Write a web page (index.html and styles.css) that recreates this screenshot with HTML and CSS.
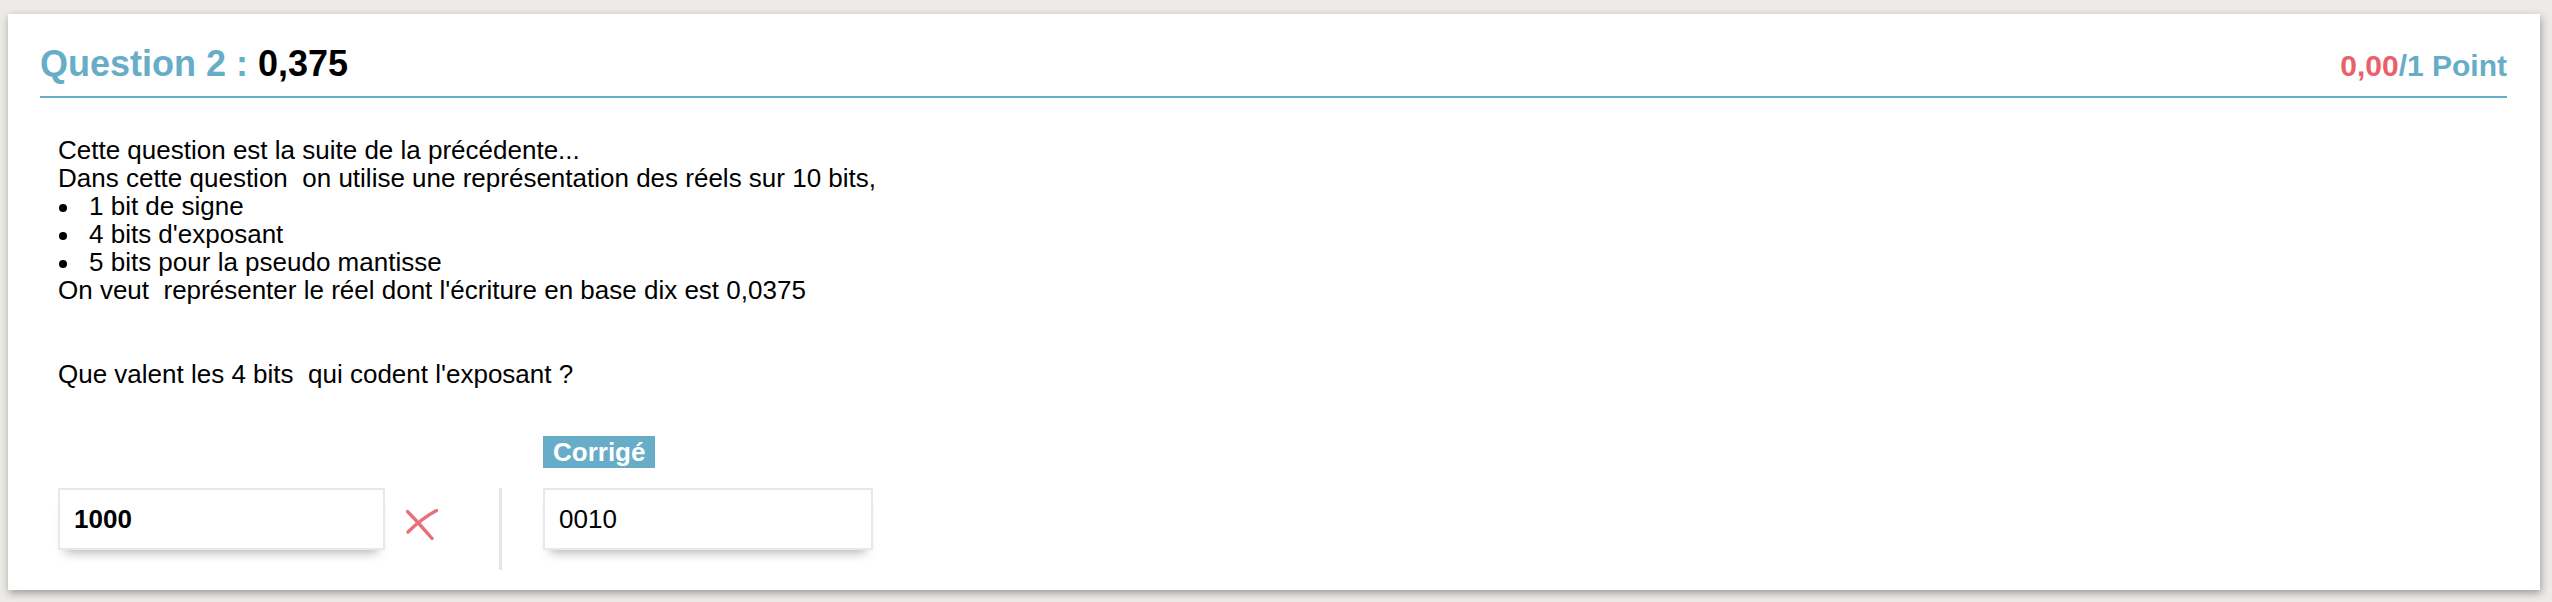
FILE: index.html
```html
<!DOCTYPE html>
<html lang="fr">
<head>
<meta charset="utf-8">
<title>Question 2</title>
<link rel="stylesheet" href="styles.css">
</head>
<body>
<div class="card">
  <div class="header">
    <h2 class="title">Question 2 : <span class="qname">0,375</span></h2>
    <div class="score"><span class="got">0,00</span>/1 Point</div>
  </div>
  <div class="stmt">
    <p>Cette question est la suite de la précédente...</p>
    <p>Dans cette question&nbsp; on utilise une représentation des réels sur 10 bits,</p>
    <ul class="bullets">
      <li><span class="dot"></span><span>1 bit de signe</span></li>
      <li><span class="dot"></span><span>4 bits d'exposant</span></li>
      <li><span class="dot"></span><span>5 bits pour la pseudo mantisse</span></li>
    </ul>
    <p>On veut&nbsp; représenter le réel dont l'écriture en base dix est 0,0375</p>
    <p class="ask">Que valent les 4 bits&nbsp; qui codent l'exposant ?</p>
  </div>
  <div class="answers">
    <div class="given">
      <div class="box bold">1000</div>
      <svg class="wrong" width="32" height="31" viewBox="0 0 32 31" aria-hidden="true">
        <path d="M1.5 2.5 C 9 10, 17 19, 26 29.5" fill="none" stroke="#e8707a" stroke-width="3.4" stroke-linecap="round"/>
        <path d="M30.5 1.5 C 22 6, 10 15, 2 23" fill="none" stroke="#e8707a" stroke-width="3.4" stroke-linecap="round"/>
      </svg>
    </div>
    <div class="divider"></div>
    <div class="correct">
      <span class="badge">Corrigé</span>
      <div class="box">0010</div>
    </div>
  </div>
</div>
</body>
</html>
```

FILE: styles.css
```css
html, body {
  margin: 0;
  padding: 0;
}
body {
  background: #edebe7;
  padding: 14px 12px 14px 8px;
  font-family: "Liberation Sans", Arial, Helvetica, sans-serif;
  color: #000;
}
.card {
  background: #fff;
  box-shadow: 1px 3px 8px rgba(0, 0, 0, 0.35);
  padding: 30px 33px 20px 32px;
}
.header {
  display: flex;
  justify-content: space-between;
  align-items: baseline;
  border-bottom: 2px solid #67adc7;
  padding-bottom: 10px;
}
.title {
  margin: 0;
  font-size: 36px;
  line-height: 40px;
  font-weight: bold;
  color: #67adc7;
}
.qname {
  color: #000;
}
.score {
  font-size: 30px;
  line-height: 40px;
  font-weight: bold;
  color: #67adc7;
}
.got {
  color: #ea6069;
}
.stmt {
  margin-top: 38px;
  padding-left: 18px;
  font-size: 26px;
  line-height: 28px;
}
.stmt p {
  margin: 0;
}
.bullets {
  list-style: none;
  margin: 0;
  padding: 0;
}
.bullets li {
  display: flex;
  align-items: flex-start;
}
.dot {
  width: 8px;
  height: 8px;
  border-radius: 50%;
  background: #000;
  margin: 12px 22px 0 1px;
  flex: none;
}
.stmt .ask {
  margin-top: 56px;
}
.answers {
  display: flex;
  align-items: flex-start;
  margin-top: 48px;
  padding-left: 18px;
}
.given {
  display: flex;
  align-items: flex-start;
  margin-top: 52px;
}
.box {
  box-sizing: border-box;
  height: 62px;
  border: 2px solid #e8e8e8;
  background: #fff;
  padding: 0 14px;
  font-size: 26px;
  line-height: 58px;
  box-shadow: 0 10px 10px -7px rgba(0, 0, 0, 0.28);
}
.given .box {
  width: 327px;
}
.bold {
  font-weight: bold;
}
.wrong {
  margin: 21px 0 0 21px;
  flex: none;
}
.divider {
  width: 3px;
  height: 82px;
  background: #e6e6e6;
  margin: 52px 41px 0 61px;
  flex: none;
}
.correct {
  display: flex;
  flex-direction: column;
  align-items: flex-start;
}
.correct .box {
  width: 330px;
  margin-top: 20px;
}
.badge {
  background: #67adc7;
  color: #fff;
  font-weight: bold;
  font-size: 26px;
  line-height: 32px;
  padding: 0 10px;
}
```
